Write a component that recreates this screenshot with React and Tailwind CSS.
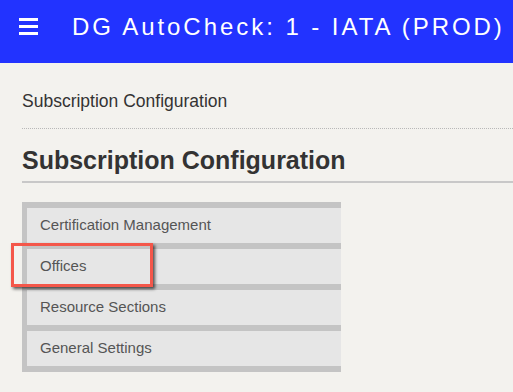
const items = ["Certification Management", "Offices", "Resource Sections", "General Settings"];

export default function App() {
  return (
    <div className="min-h-[392px] bg-[#f3f2ee] font-['Liberation_Sans',Arial,sans-serif]">
      <header className="flex h-[63px] items-start bg-[#2233ff] text-white">
        <div className="ml-[19px] mt-[18px] flex w-[19px] flex-col gap-[4px]">
          <span className="h-[3px] bg-white" />
          <span className="h-[3px] bg-white" />
          <span className="h-[3px] bg-white" />
        </div>
        <h1 className="ml-[34px] mt-[13px] whitespace-nowrap text-[24px] leading-[28px] tracking-[2.95px]">
          DG AutoCheck: 1 - IATA (PROD)
        </h1>
      </header>

      <main className="pl-[22px]">
        <div className="pt-[28px] pb-[17px] text-[17.5px] leading-[20px] text-[#333]">
          Subscription Configuration
        </div>
        <div className="border-t border-dotted border-[#b8b8b8]" />
        <h2 className="mt-[16px] border-b-2 border-[#c8c8c8] pb-[6px] text-[25px] font-bold leading-[30px] text-[#333]">
          Subscription Configuration
        </h2>

        <div className="relative mt-[19px] flex w-[319px] flex-col gap-[6px] bg-[#c4c4c4] py-[6px] pl-[5px]">
          {items.map((item) => (
            <div
              key={item}
              className="flex h-[35px] items-center bg-[#e6e6e6] pl-[13px] text-[15px] text-[#555]"
            >
              {item}
            </div>
          ))}
          <div className="absolute left-[-11px] top-[41px] h-[44px] w-[142px] border-[3px] border-[#f4574a] shadow-[2px_2px_3px_rgba(0,0,0,0.65)]" />
        </div>
      </main>
    </div>
  );
}
